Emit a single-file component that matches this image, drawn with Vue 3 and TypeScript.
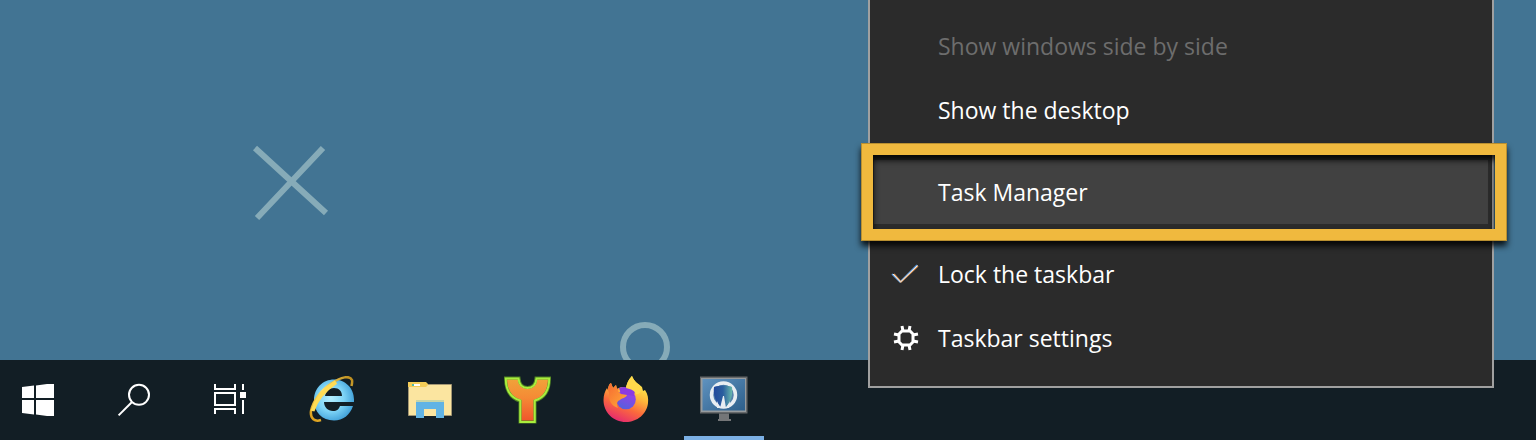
<script setup lang="ts">
import { ref } from 'vue'

type AppId = 'ie' | 'explorer' | 'y' | 'firefox' | 'remote'

interface MenuItem {
  label: string
  disabled?: boolean
  icon?: 'check' | 'gear'
  marked?: boolean
}

const menu: MenuItem[] = [
  { label: 'Show windows side by side', disabled: true },
  { label: 'Show the desktop' },
  { label: 'Task Manager', marked: true },
  { label: 'Lock the taskbar', icon: 'check' },
  { label: 'Taskbar settings', icon: 'gear' },
]

const apps: { id: AppId; name: string }[] = [
  { id: 'ie', name: 'Internet Explorer' },
  { id: 'explorer', name: 'File Explorer' },
  { id: 'y', name: 'Y' },
  { id: 'firefox', name: 'Firefox' },
  { id: 'remote', name: 'Remote desktop' },
]

const active = ref<AppId>('remote')
</script>

<template>
  <div class="screen">
    <main class="desktop">
      <svg class="wallpaper" aria-hidden="true">
        <g fill="none" stroke="#86abb8" stroke-width="6">
          <path d="M255 148 326 213M323 148 257 218" stroke-width="6" />
          <circle cx="645" cy="347" r="22" />
        </g>
      </svg>
    </main>

    <footer class="taskbar">
      <nav class="system">
        <button class="slot" type="button" aria-label="Start">
          <svg viewBox="0 0 48 48">
            <path fill="#fff" d="M8 11 20 9.500V22H8ZM22 9.500 33 8H40V22H22ZM8 24H20V38.500L8 37ZM22 24H40V40H33L22 38.500Z" />
          </svg>
        </button>
        <button class="slot" type="button" aria-label="Search">
          <svg viewBox="0 0 48 48" fill="none" stroke="#fff" stroke-width="2">
            <circle cx="29" cy="18.800" r="10" />
            <path d="M22 26 8.600 39.400" />
          </svg>
        </button>
        <button class="slot" type="button" aria-label="Task View">
          <svg viewBox="0 0 48 48">
            <path fill="none" stroke="#fff" stroke-width="2" d="M9 8V13H29V8M9 17H29V29H9ZM9 38V33H29V38M37 8V14M37 24V38" />
            <path fill="#fff" d="M34 16h6v6h-6z" />
          </svg>
        </button>
      </nav>

      <nav class="apps">
        <button
          v-for="app in apps"
          :key="app.id"
          class="slot app"
          :class="{ active: active === app.id }"
          type="button"
          :aria-label="app.name"
          @click="active = app.id"
        >
          <svg v-if="app.id === 'ie'" viewBox="0 0 48 48">
            <defs>
              <radialGradient id="ieBlue" cx=".42" cy=".45" r=".6">
                <stop offset="0" stop-color="#b5efff" />
                <stop offset=".55" stop-color="#7dd3f6" />
                <stop offset="1" stop-color="#3f9fd8" />
              </radialGradient>
              <linearGradient id="ieGold" x1="0" y1="1" x2="1" y2="0">
                <stop offset="0" stop-color="#d99a16" />
                <stop offset=".5" stop-color="#ffe36b" />
                <stop offset="1" stop-color="#b98a1c" />
              </linearGradient>
            </defs>
            <path
              fill="url(#ieBlue)"
              fill-rule="evenodd"
              d="M26 3.500C37 3.500 46 12 46 23.500V26H16C16 31 20 35 25 35C29 35 31 33 32 30H45C42 39 35 44.500 26 44.500C14 44.500 6 36 6 24C6 12 15 3.500 26 3.500ZM17 20H34C34 15 31 12 26 12C21 12 18 15 17 20Z"
            />
            <path
              fill="none"
              stroke="url(#ieGold)"
              stroke-width="2.500"
              d="M13 44C7 46 2 43 3 35C5 25 13 14 24 7C33 1 42-1 44 4C44.500 6 44 8 43.500 10"
            />
            <path fill="none" stroke="#ffdc55" stroke-width="4" d="M4.500 35C8 24 16 14 28 6" />
          </svg>

          <svg v-else-if="app.id === 'explorer'" viewBox="0 0 48 48">
            <path fill="#fbe5a0" stroke="#a39673" stroke-width="1" d="M2.500 8.500H45.500V39.500H2.500Z" />
            <path fill="#f4cd58" d="M2 6H20L22 8V9L20 11H2Z" />
            <path fill="#fff" d="M6 8h8v2H6z" />
            <path fill="#55bca9" d="M6 8h2v2H6z" />
            <path fill="#c7d5a8" d="M10 24h28v2H10z" />
            <path fill="#61b3e4" d="M10 26H38V42H30V33H18V42H10Z" />
            <path fill="#fbe5a0" d="M18 34h12v6H18z" />
          </svg>

          <svg v-else-if="app.id === 'y'" viewBox="0 0 48 48">
            <defs>
              <linearGradient id="yFill" x1="0" y1="0" x2="0" y2="1">
                <stop offset="0" stop-color="#f0a43a" />
                <stop offset=".45" stop-color="#f58a35" />
                <stop offset="1" stop-color="#f0532b" />
              </linearGradient>
            </defs>
            <path
              fill="url(#yFill)"
              stroke="#4f8424"
              stroke-width="3"
              d="M1.500 2H15C15.500 8 18 11.500 23.500 11.500C29 11.500 31.500 8 32 2H45.500C45.500 14 41 22 31 25V46H16V25C6 22 1.500 14 1.500 2Z"
            />
            <path
              fill="none"
              stroke="#a9ee3d"
              stroke-width="2"
              d="M1.800 2.500H14.500C15 8.500 18 12 23.500 12C29 12 32 8.500 32.500 2.500H45.200C45.200 14 41 21.500 30.700 24.500V46H16.300V24.500C6 21.500 1.800 14 1.800 2.500Z"
            />
          </svg>

          <svg v-else-if="app.id === 'firefox'" viewBox="0 0 48 48">
            <defs>
              <linearGradient id="fxBody" x1=".75" y1=".1" x2=".35" y2="1">
                <stop offset="0" stop-color="#fff04f" />
                <stop offset=".35" stop-color="#ffb73a" />
                <stop offset=".65" stop-color="#fb6a3c" />
                <stop offset="1" stop-color="#e52a6f" />
              </linearGradient>
              <linearGradient id="fxGlobe" x1=".7" y1="0" x2=".3" y2="1">
                <stop offset="0" stop-color="#a23be8" />
                <stop offset="1" stop-color="#5361dd" />
              </linearGradient>
              <linearGradient id="fxHead" x1="0" y1="0" x2="1" y2="1">
                <stop offset="0" stop-color="#f66a32" />
                <stop offset="1" stop-color="#ffad38" />
              </linearGradient>
            </defs>
            <path
              fill="url(#fxBody)"
              d="M9 7L11 12L14 9L15 13C18 11 21 11 24 12C25 6 28 2 30 0C32 6 37 8 40 11L41 15L43 14C46 18 46.500 23 46 27C45 38 35 46 24 46C11 46 1.500 36 1.500 24C1.500 19 3 15 5 12L6 14C6 11 7 8 9 7Z"
            />
            <circle cx="24" cy="23.500" r="9.800" fill="url(#fxGlobe)" />
            <path fill="#8b3be0" d="M17 12C21 10 28 11 33 15L32 20L19 18Z" />
            <path
              fill="url(#fxHead)"
              d="M9 7L11 12L14 9L15 13L17 12L16 15L19 18L25 19C24 22 20 22 18 24C15 25 14 28 16 32C10 30 6 25 7 17L6 14C6 11 7 8 9 7Z"
            />
            <path fill="#ffd94b" d="M24 12C25 6 28 2 30 0C32 6 37 8 40 12C39 17 36 19 34 18C33 15 29 13 24 12Z" />
          </svg>

          <svg v-else viewBox="0 0 48 48">
            <defs>
              <linearGradient id="rdScreen" x1="0" y1="0" x2="1" y2="1">
                <stop offset="0" stop-color="#5f92bf" />
                <stop offset="1" stop-color="#2d5f8b" />
              </linearGradient>
              <linearGradient id="rdCore" x1="0" y1="0" x2="1" y2="0">
                <stop offset="0" stop-color="#23499c" />
                <stop offset=".5" stop-color="#2b5f9f" />
                <stop offset="1" stop-color="#69b9ac" />
              </linearGradient>
            </defs>
            <path fill="#66696b" d="M0 0.500H47.500V37.500H0Z" />
            <path fill="#969b9e" d="M1 2H46V36H1Z" />
            <path fill="url(#rdScreen)" d="M2.500 3H45V34.500H2.500Z" />
            <path fill="#747678" d="M19 37.500H29V43H31V45H18V43H19Z" />
            <ellipse cx="23.500" cy="19" rx="12" ry="12" fill="#5482ab" stroke="#e8edf2" stroke-width="3.500" />
            <path fill="url(#rdCore)" d="M14 11C19 9 28 9 32 11C33 18 31 26 26 31H21C15 26 13 18 14 11Z" />
            <path fill="#e8edf2" d="M23 20H24L26 32H20ZM17 25L20 32H17ZM30 25L26 32H29Z" />
          </svg>
        </button>
      </nav>
    </footer>

    <ul class="menu" role="menu">
      <li v-for="item in menu" :key="item.label" class="row" :class="{ marked: item.marked }" role="none">
        <button class="item" type="button" role="menuitem" :disabled="item.disabled">
          <span class="icon">
            <svg v-if="item.icon === 'check'" viewBox="0 0 32 32" fill="none">
              <path stroke="#5c9ce0" stroke-width="1.500" d="M2 16 10 24 27 7" />
              <path stroke="#e09a5c" stroke-width="1.500" d="M4 16 11 24 28 8" />
              <path stroke="#f2f2f2" stroke-width="1" d="M3 16 10.500 24 27.500 7.500" />
            </svg>
            <svg v-else-if="item.icon === 'gear'" viewBox="0 0 32 32">
              <path
                fill="none"
                stroke="#fff"
                stroke-width="3"
                d="M12 9H20L23 12V20L20 23H12L9 20V12Z"
              />
              <path
                fill="none"
                stroke="#fff"
                stroke-width="3"
                d="M13 9 12 4M19 9 20 4M13 23 12 28M19 23 20 28M9 13 4 12M9 19 4 20M23 13 28 12M23 19 28 20"
              />
            </svg>
          </span>
          <span>{{ item.label }}</span>
        </button>
      </li>
    </ul>
  </div>
</template>

<style>
body {
  margin: 0;
}
</style>

<style scoped>
.screen {
  position: relative;
  display: flex;
  flex-direction: column;
  min-height: 100vh;
  overflow: hidden;
  background: #427493;
  font-family: "Open Sans", "Noto Sans", sans-serif;
}

.desktop {
  display: flex;
  flex: 1;
}

.wallpaper {
  flex: 1;
  height: auto;
}

.taskbar {
  display: flex;
  gap: 24px;
  height: 80px;
  background: #121e25;
}

.system {
  display: flex;
  gap: 20px;
}

.apps {
  display: flex;
  gap: 18px;
}

.slot {
  display: flex;
  align-items: center;
  justify-content: center;
  box-sizing: border-box;
  width: 76px;
  padding: 0;
  border: 0;
  background: none;
}

.slot svg {
  width: 48px;
  height: 48px;
}

.app {
  width: 80px;
}

.active {
  box-shadow: inset 0 -4px #7bb0e5;
}

.menu {
  position: absolute;
  right: 42px;
  bottom: 52px;
  box-sizing: border-box;
  width: 626px;
  margin: 0;
  padding: 14px 4px 16px;
  border: 2px solid #a0a0a0;
  border-top: 0;
  background: #2b2b2b;
  list-style: none;
}

.row {
  position: relative;
}

.item {
  display: flex;
  align-items: center;
  gap: 16px;
  width: 100%;
  height: 64px;
  padding: 0 16px;
  border: 0;
  background: none;
  color: #fff;
  font: inherit;
  font-size: 23px;
  line-height: 32px;
  text-align: left;
}

.item:disabled {
  color: #6d6d6d;
}

.icon,
.icon svg {
  display: block;
  width: 32px;
  height: 32px;
}

.marked {
  margin: 18px 0;
  background: #414141;
}

.marked::after {
  content: "";
  position: absolute;
  inset: -17px -19px -17px -13px;
  border: 12px solid #f0b93e;
  outline: 1px solid #b98f30;
  outline-offset: -1px;
  filter: drop-shadow(0 5px 3px rgba(0, 0, 0, 0.85));
  pointer-events: none;
}
</style>
